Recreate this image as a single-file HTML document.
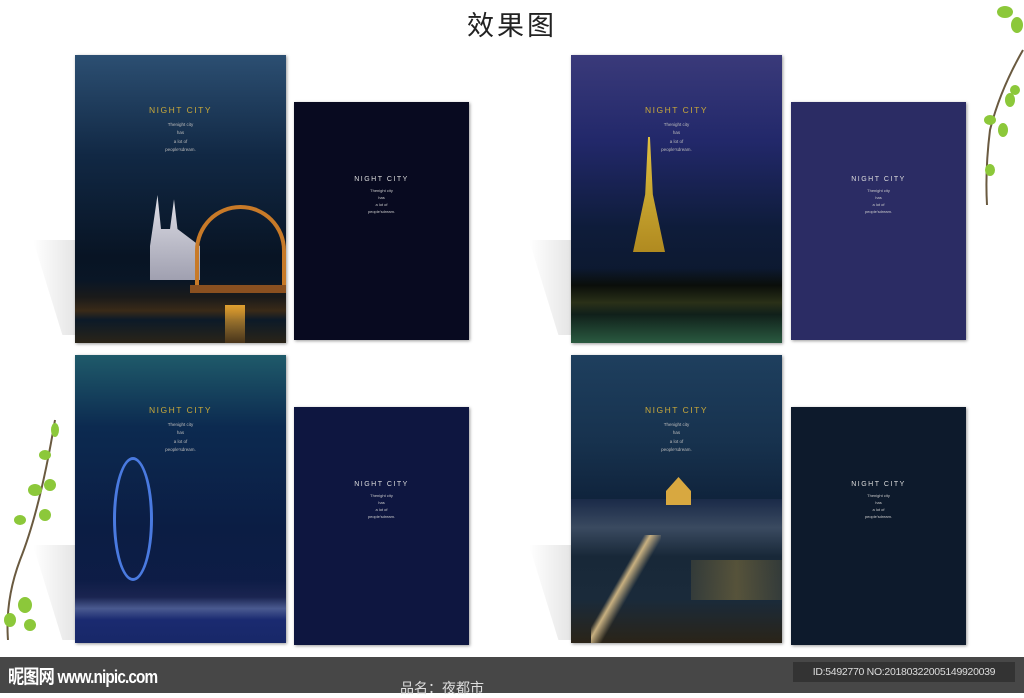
<!DOCTYPE html><html><head><meta charset="utf-8"><style>
*{margin:0;padding:0;box-sizing:border-box}
body{width:1024px;height:693px;background:#fff;position:relative;overflow:hidden;font-family:"Liberation Sans","Noto Sans CJK SC",sans-serif}
.t{position:absolute;left:0;width:1024px;top:4px;text-align:center;font-size:27px;color:#222;letter-spacing:3px}
.c{position:absolute;width:211px;height:288px;box-shadow:1px 1px 3px rgba(0,0,0,.4);overflow:hidden}
.b{position:absolute;width:175px;height:238px;box-shadow:1px 1px 3px rgba(0,0,0,.4)}
.sh{position:absolute;width:42px;height:95px;background:linear-gradient(90deg,rgba(255,255,255,0),rgba(0,0,0,.1));clip-path:polygon(0 0,100% 0,100% 100%,70% 100%)}
.h{position:absolute;left:0;width:100%;text-align:center;color:#c9a93a;font-size:8.5px;letter-spacing:1.5px;top:50px}
.s{position:absolute;left:0;width:100%;text-align:center;color:#bbb;font-size:4.5px;line-height:8.3px;top:66px}
.b .h{color:#ddd;font-size:7px;top:74px}.b .s{top:85px;font-size:4px;line-height:7px;color:#ccc}
.city{position:absolute;left:0;bottom:0;width:100%;height:40%}
.foot{position:absolute;left:0;top:657px;width:1024px;height:36px;background:#474747}
</style></head><body>
<div class="t">效果图</div>

<div class="sh" style="left:33px;top:240px"></div>
<div class="sh" style="left:33px;top:545px"></div>
<div class="sh" style="left:529px;top:240px"></div>
<div class="sh" style="left:529px;top:545px"></div>

<div class="c" style="left:75px;top:55px;background:linear-gradient(#2c4f72,#112844 35%,#081424 70%,#0c1a2a)">
<div class="city" style="background:linear-gradient(transparent 0%,transparent 45%,#1a1a1a 60%,#3a2a18 72%,#0c1a28 80%,#2a2418)"></div>
<div style="position:absolute;left:75px;top:140px;width:50px;height:85px;background:linear-gradient(#e0e0e8,#a0a0b0);clip-path:polygon(15% 0,22% 40%,40% 40%,48% 5%,55% 40%,100% 60%,100% 100%,0 100%,0 60%)"></div>
<div style="position:absolute;left:120px;top:150px;width:91px;height:80px;border:4px solid #c87a28;border-bottom:none;border-radius:60px 60px 0 0"></div>
<div style="position:absolute;left:115px;top:230px;width:96px;height:8px;background:#8a5020"></div>
<div style="position:absolute;left:150px;top:250px;width:20px;height:38px;background:linear-gradient(#e0a030,rgba(200,120,30,.2))"></div>
<div class="h">NIGHT CITY</div><div class="s">Thenight city<br>has<br>a lot of<br>people'sdream.</div></div>
<div class="b" style="left:294px;top:102px;background:#080a20"><div class="h">NIGHT CITY</div><div class="s">Thenight city<br>has<br>a lot of<br>people'sdream.</div></div>

<div class="c" style="left:75px;top:355px;background:linear-gradient(#1f5a6a,#0c2a50 25%,#0b1d44 60%,#101c48)">
<div class="city" style="background:linear-gradient(transparent,transparent 45%,#1a2450 60%,#4a5a90 70%,#1a2a70 80%,#182868)"></div>
<div style="position:absolute;left:38px;top:102px;width:40px;height:124px;border:3px solid #4a7ae0;border-radius:50%"></div>
<div class="h">NIGHT CITY</div><div class="s">Thenight city<br>has<br>a lot of<br>people'sdream.</div></div>
<div class="b" style="left:294px;top:407px;background:#0e1640"><div class="h">NIGHT CITY</div><div class="s">Thenight city<br>has<br>a lot of<br>people'sdream.</div></div>

<div class="c" style="left:571px;top:55px;background:linear-gradient(#3a3a7a,#22286a 30%,#0e1c3a 60%,#0a1420)">
<div class="city" style="background:linear-gradient(transparent,transparent 35%,#0a0e0a 50%,#2a3018 65%,#10201a 75%,#2a5a40)"></div>
<div style="position:absolute;left:62px;top:82px;width:32px;height:115px;background:linear-gradient(#e0c040,#b08a20);clip-path:polygon(47% 0,53% 0,62% 50%,100% 100%,0 100%,38% 50%)"></div>
<div class="h">NIGHT CITY</div><div class="s">Thenight city<br>has<br>a lot of<br>people'sdream.</div></div>
<div class="b" style="left:791px;top:102px;background:#2b2c64"><div class="h">NIGHT CITY</div><div class="s">Thenight city<br>has<br>a lot of<br>people'sdream.</div></div>

<div class="c" style="left:571px;top:355px;background:linear-gradient(#1e3f5e,#17324e 30%,#0e2038 55%,#0c1828)">
<div class="city" style="height:50%;background:linear-gradient(#1a2a48,#3a4a60 20%,#182838 40%,#1a2a3a 70%,#2a2418)"></div>
<div style="position:absolute;left:95px;top:122px;width:25px;height:28px;background:#d8a840;clip-path:polygon(50% 0,100% 50%,100% 100%,0 100%,0 50%)"></div>
<div style="position:absolute;left:20px;top:180px;width:70px;height:108px;background:linear-gradient(120deg,transparent 40%,#c8b080 45%,transparent 55%)"></div>
<div style="position:absolute;left:120px;top:205px;width:91px;height:40px;background:linear-gradient(90deg,rgba(200,160,60,.15),rgba(200,160,60,.35),rgba(200,160,60,.15))"></div>
<div class="h">NIGHT CITY</div><div class="s">Thenight city<br>has<br>a lot of<br>people'sdream.</div></div>
<div class="b" style="left:791px;top:407px;background:#0d1a2c"><div class="h">NIGHT CITY</div><div class="s">Thenight city<br>has<br>a lot of<br>people'sdream.</div></div>

<svg style="position:absolute;left:965px;top:0" width="59" height="210"><path d="M58 50 Q35 90 25 130 Q20 170 22 205" stroke="#6a5a40" stroke-width="2" fill="none"/>
<g fill="#8cc83a"><ellipse cx="40" cy="12" rx="8" ry="6"/><ellipse cx="52" cy="25" rx="6" ry="8"/><ellipse cx="45" cy="100" rx="5" ry="7"/><ellipse cx="25" cy="120" rx="6" ry="5"/><ellipse cx="38" cy="130" rx="5" ry="7"/><ellipse cx="25" cy="170" rx="5" ry="6"/><ellipse cx="50" cy="90" rx="5" ry="5"/></g></svg>
<svg style="position:absolute;left:0;top:410px" width="75" height="230"><path d="M55 10 Q40 100 20 150 Q5 190 8 230" stroke="#6a5a40" stroke-width="2" fill="none"/>
<g fill="#8cc83a"><ellipse cx="55" cy="20" rx="4" ry="7"/><ellipse cx="45" cy="45" rx="6" ry="5"/><ellipse cx="35" cy="80" rx="7" ry="6"/><ellipse cx="50" cy="75" rx="6" ry="6"/><ellipse cx="20" cy="110" rx="6" ry="5"/><ellipse cx="45" cy="105" rx="6" ry="6"/><ellipse cx="25" cy="195" rx="7" ry="8"/><ellipse cx="10" cy="210" rx="6" ry="7"/><ellipse cx="30" cy="215" rx="6" ry="6"/></g></svg>

<div class="foot">
<div style="position:absolute;left:8px;top:5px;color:#fff;font-size:19px;font-weight:bold;letter-spacing:-1px;transform:scaleX(.85);transform-origin:left">昵图网 <span style="font-size:18px">www.nipic.com</span></div>
<div style="position:absolute;left:400px;top:21px;color:#ddd;font-size:14px">品名：夜都市</div>
<div style="position:absolute;left:793px;top:5px;width:222px;height:20px;background:#333;color:#ddd;font-size:10.5px;line-height:20px;text-align:center;letter-spacing:-0.3px">ID:5492770 NO:20180322005149920039</div>
</div>
</body></html>
